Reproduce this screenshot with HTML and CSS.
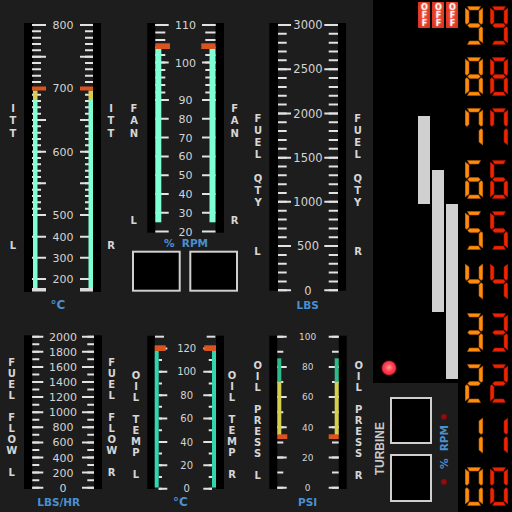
FILE: index.html
```html
<!DOCTYPE html>
<html lang="en">
<head>
<meta charset="utf-8">
<title>Engine Instruments</title>
<link rel="stylesheet" href="styles.css">
</head>
<body>
<svg class="defs" aria-hidden="true" width="0" height="0">
  <defs>
    <polygon id="sa" points="2.5,0.4 15.5,0.4 13.6,4 4.4,4"/>
    <polygon id="sf" points="0.2,2 4,5 4,16.3 2,18.4 0.2,17"/>
    <polygon id="sb" points="17.8,2 14,5 14,16.3 16,18.4 17.8,17"/>
    <polygon id="sg" points="2.6,19.5 4.6,17.6 13.4,17.6 15.4,19.5 13.4,21.4 4.6,21.4"/>
    <polygon id="se" points="0.2,22 2,20.6 4,22.7 4,34 0.2,37"/>
    <polygon id="sc" points="17.8,22 16,20.6 14,22.7 14,34 17.8,37"/>
    <polygon id="sd" points="4.4,35 13.6,35 15.5,38.6 2.5,38.6"/>
  </defs>
</svg>
<div class="screen">
  <div class="gauges">
    <!-- ITT -->
    <svg class="gauge" width="128" height="320" viewBox="0 0 128 320">
      <rect class="blk" x="24" y="23" width="9" height="269"/>
      <rect class="blk" x="93" y="23" width="8" height="269"/>
      <line class="tk" x1="36.5" y1="24" x2="36.5" y2="216" stroke-width="9" stroke-dasharray="2 4.3333"/>
      <line class="tk" x1="39" y1="24" x2="39" y2="216" stroke-width="14" stroke-dasharray="2 29.6667"/>
      <line class="tk" x1="89" y1="24" x2="89" y2="216" stroke-width="8" stroke-dasharray="2 4.3333"/>
      <line class="tk" x1="86.5" y1="24" x2="86.5" y2="216" stroke-width="13" stroke-dasharray="2 29.6667"/>
      <path class="tk" stroke-width="2" d="M32 236.7H46M32 257.7H46M32 279H46M80 236.7H93M80 257.7H93M80 279H93"/>
      <rect class="cap" x="32" y="288" width="14" height="3.5"/>
      <rect class="cap" x="80" y="288" width="13" height="3.5"/>
      <rect class="yl" x="33" y="90.5" width="4.5" height="9.5"/>
      <rect class="yl" x="88.5" y="90.5" width="4.5" height="9.5"/>
      <rect class="aq" x="33" y="100" width="4.5" height="188"/>
      <rect class="aq" x="88.5" y="100" width="4.5" height="188"/>
      <rect class="rd" x="32" y="86.5" width="14" height="4"/>
      <rect class="rd" x="80" y="86.5" width="13" height="4"/>
      <g class="n n11">
        <text x="63" y="29">800</text>
        <text x="63" y="92.3">700</text>
        <text x="63" y="155.7">600</text>
        <text x="63" y="219">500</text>
        <text x="63" y="240.7">400</text>
        <text x="63" y="261.7">300</text>
        <text x="63" y="283">200</text>
      </g>
      <text class="lb"><tspan x="13" y="112">I</tspan><tspan x="13" y="124.2">T</tspan><tspan x="13" y="136.5">T</tspan><tspan x="13" y="249.3">L</tspan></text>
      <text class="lb"><tspan x="111" y="112">I</tspan><tspan x="111" y="124.2">T</tspan><tspan x="111" y="136.5">T</tspan><tspan x="111" y="249.3">R</tspan></text>
      <text class="un u12" x="58" y="308.5">°C</text>
    </svg>

    <!-- FAN -->
    <svg class="gauge" width="128" height="320" viewBox="0 0 128 320">
      <rect class="blk" x="19.3" y="23" width="8" height="209.7"/>
      <rect class="blk" x="87.5" y="23" width="8.5" height="209.7"/>
      <line class="tk" x1="32.3" y1="24" x2="32.3" y2="101" stroke-width="10" stroke-dasharray="2 5.5"/>
      <line class="tk" x1="34" y1="24" x2="34" y2="101" stroke-width="13.4" stroke-dasharray="2 35.5"/>
      <line class="tk" x1="34" y1="99" x2="34" y2="233" stroke-width="13.4" stroke-dasharray="2 16.8"/>
      <line class="tk" x1="82.4" y1="24" x2="82.4" y2="101" stroke-width="10.2" stroke-dasharray="2 5.5"/>
      <line class="tk" x1="80.75" y1="24" x2="80.75" y2="101" stroke-width="13.5" stroke-dasharray="2 35.5"/>
      <line class="tk" x1="80.75" y1="99" x2="80.75" y2="233" stroke-width="13.5" stroke-dasharray="2 16.8"/>
      <rect class="aq" x="27.3" y="49" width="6" height="173.3"/>
      <rect class="aq" x="81.5" y="49" width="6" height="173.3"/>
      <rect class="rd" x="27.3" y="43.3" width="14.7" height="5.7"/>
      <rect class="rd" x="73.3" y="43.3" width="14.2" height="5.7"/>
      <g class="n n11">
        <text x="57.5" y="29">110</text>
        <text x="57.5" y="66.5">100</text>
        <text x="57.5" y="104">90</text>
        <text x="57.5" y="122.8">80</text>
        <text x="57.5" y="141.6">70</text>
        <text x="57.5" y="160.4">60</text>
        <text x="57.5" y="179.2">50</text>
        <text x="57.5" y="198">40</text>
        <text x="57.5" y="216.8">30</text>
        <text x="57.5" y="235.6">20</text>
      </g>
      <text class="lb"><tspan x="6" y="112">F</tspan><tspan x="6" y="124.2">A</tspan><tspan x="6" y="136.5">N</tspan><tspan x="5.7" y="223.6">L</tspan></text>
      <text class="lb"><tspan x="106.7" y="112">F</tspan><tspan x="106.7" y="124.2">A</tspan><tspan x="106.7" y="136.5">N</tspan><tspan x="106.7" y="223.6">R</tspan></text>
      <text class="un" x="58" y="247.1">%&#160;&#160;RPM</text>
      <rect class="frame" x="5" y="251.7" width="46.7" height="39"/>
      <rect class="frame" x="62.3" y="251.7" width="46.7" height="39"/>
    </svg>

    <!-- FUEL QTY -->
    <svg class="gauge" width="117" height="320" viewBox="0 0 117 320">
      <rect class="blk" x="13.3" y="23" width="8.7" height="267.7"/>
      <rect class="blk" x="82" y="23" width="8" height="267.7"/>
      <line class="tk" x1="26.35" y1="24" x2="26.35" y2="291.3" stroke-width="8.7" stroke-dasharray="2 6.843"/>
      <line class="tk" x1="28.5" y1="24" x2="28.5" y2="291.3" stroke-width="13" stroke-dasharray="2 42.215"/>
      <line class="tk" x1="77.35" y1="24" x2="77.35" y2="291.3" stroke-width="9.3" stroke-dasharray="2 6.843"/>
      <line class="tk" x1="75.15" y1="24" x2="75.15" y2="291.3" stroke-width="13.7" stroke-dasharray="2 42.215"/>
      <g class="n n115">
        <text x="52" y="29.2">3000</text>
        <text x="52" y="73.4">2500</text>
        <text x="52" y="117.6">2000</text>
        <text x="52" y="161.9">1500</text>
        <text x="52" y="206.1">1000</text>
        <text x="52" y="250.3">500</text>
        <text x="52" y="294.5">0</text>
      </g>
      <text class="lb"><tspan x="2" y="121.65">F</tspan><tspan x="2" y="133.65">U</tspan><tspan x="2" y="145.65">E</tspan><tspan x="2" y="157.65">L</tspan><tspan x="2" y="181.65">Q</tspan><tspan x="2" y="193.65">T</tspan><tspan x="2" y="205.65">Y</tspan><tspan x="1.5" y="255.35">L</tspan></text>
      <text class="lb"><tspan x="101.7" y="121.65">F</tspan><tspan x="101.7" y="133.65">U</tspan><tspan x="101.7" y="145.65">E</tspan><tspan x="101.7" y="157.65">L</tspan><tspan x="101.7" y="181.65">Q</tspan><tspan x="101.7" y="193.65">T</tspan><tspan x="101.7" y="205.65">Y</tspan><tspan x="102" y="255.35">R</tspan></text>
      <text class="un" x="51.7" y="308.8">LBS</text>
    </svg>

    <!-- FUEL FLOW -->
    <svg class="gauge" width="128" height="192" viewBox="0 0 128 192">
      <rect class="blk" x="24" y="15.3" width="8.3" height="153.7"/>
      <rect class="blk" x="94" y="15.3" width="8" height="153.7"/>
      <line class="tk" x1="35.8" y1="15.7" x2="35.8" y2="168.7" stroke-width="7" stroke-dasharray="2 5.55"/>
      <line class="tk" x1="37.8" y1="15.7" x2="37.8" y2="168.7" stroke-width="11" stroke-dasharray="2 13.1"/>
      <line class="tk" x1="90.65" y1="15.7" x2="90.65" y2="168.7" stroke-width="6.7" stroke-dasharray="2 5.55"/>
      <line class="tk" x1="88" y1="15.7" x2="88" y2="168.7" stroke-width="12" stroke-dasharray="2 13.1"/>
      <g class="n n11">
        <text x="63" y="20.7">2000</text>
        <text x="63" y="35.8">1800</text>
        <text x="63" y="50.9">1600</text>
        <text x="63" y="66">1400</text>
        <text x="63" y="81.1">1200</text>
        <text x="63" y="96.2">1000</text>
        <text x="63" y="111.3">800</text>
        <text x="63" y="126.4">600</text>
        <text x="63" y="141.5">400</text>
        <text x="63" y="156.6">200</text>
        <text x="63" y="171.7">0</text>
      </g>
      <text class="lb"><tspan x="11.7" y="45.65">F</tspan><tspan x="11.7" y="56.65">U</tspan><tspan x="11.7" y="67.65">E</tspan><tspan x="11.7" y="78.65">L</tspan><tspan x="11.7" y="100.65">F</tspan><tspan x="11.7" y="111.65">L</tspan><tspan x="11.7" y="122.65">O</tspan><tspan x="11.7" y="133.65">W</tspan><tspan x="11.7" y="156.15">L</tspan></text>
      <text class="lb"><tspan x="111.7" y="45.65">F</tspan><tspan x="111.7" y="56.65">U</tspan><tspan x="111.7" y="67.65">E</tspan><tspan x="111.7" y="78.65">L</tspan><tspan x="111.7" y="100.65">F</tspan><tspan x="111.7" y="111.65">L</tspan><tspan x="111.7" y="122.65">O</tspan><tspan x="111.7" y="133.65">W</tspan><tspan x="111.7" y="156.15">R</tspan></text>
      <text class="un" x="58.7" y="185.5">LBS/HR</text>
    </svg>

    <!-- OIL TEMP -->
    <svg class="gauge" width="128" height="192" viewBox="0 0 128 192">
      <rect class="blk" x="19.3" y="15.7" width="7.4" height="153.3"/>
      <rect class="blk" x="88" y="15.7" width="8" height="153.3"/>
      <rect class="cap" x="27" y="15.7" width="9" height="2"/>
      <rect class="cap" x="78.7" y="15.7" width="8.6" height="2"/>
      <line class="tk" x1="32.35" y1="27.4" x2="32.35" y2="169.7" stroke-width="3.3" stroke-dasharray="2 9.69"/>
      <line class="tk" x1="35" y1="27.4" x2="35" y2="169.7" stroke-width="8.6" stroke-dasharray="2 21.38"/>
      <line class="tk" x1="82.35" y1="27.4" x2="82.35" y2="169.7" stroke-width="3.3" stroke-dasharray="2 9.69"/>
      <line class="tk" x1="79.65" y1="27.4" x2="79.65" y2="169.7" stroke-width="8.7" stroke-dasharray="2 21.38"/>
      <rect class="tl" x="26.7" y="31" width="4" height="136.5"/>
      <rect class="tl" x="84" y="31" width="4" height="136.5"/>
      <rect class="rd" x="26.7" y="25.3" width="11" height="5.7"/>
      <rect class="rd" x="76.3" y="25.3" width="11.7" height="5.7"/>
      <g class="n n10">
        <text x="58.7" y="32.05">120</text>
        <text x="58.7" y="55.45">100</text>
        <text x="58.7" y="78.85">80</text>
        <text x="58.7" y="102.15">60</text>
        <text x="58.7" y="125.55">40</text>
        <text x="58.7" y="148.95">20</text>
        <text x="58.7" y="172.35">0</text>
      </g>
      <text class="lb"><tspan x="8" y="59.15">O</tspan><tspan x="8" y="70.15">I</tspan><tspan x="8" y="81.15">L</tspan><tspan x="8" y="103.15">T</tspan><tspan x="8" y="114.15">E</tspan><tspan x="8" y="125.15">M</tspan><tspan x="8" y="136.15">P</tspan><tspan x="8" y="158.15">L</tspan></text>
      <text class="lb"><tspan x="104" y="59.15">O</tspan><tspan x="104" y="70.15">I</tspan><tspan x="104" y="81.15">L</tspan><tspan x="104" y="103.15">T</tspan><tspan x="104" y="114.15">E</tspan><tspan x="104" y="125.15">M</tspan><tspan x="104" y="136.15">P</tspan><tspan x="104" y="158.15">R</tspan></text>
      <text class="un u12" x="52.3" y="186">°C</text>
    </svg>

    <!-- OIL PRESS -->
    <svg class="gauge" width="117" height="192" viewBox="0 0 117 192">
      <rect class="blk" x="13.3" y="15.7" width="8" height="153.3"/>
      <rect class="blk" x="82.7" y="15.7" width="8" height="153.3"/>
      <line class="tk" x1="24.3" y1="15.7" x2="24.3" y2="168.7" stroke-width="6" stroke-dasharray="2 13.1"/>
      <line class="tk" x1="26" y1="15.7" x2="26" y2="168.7" stroke-width="9.4" stroke-dasharray="2 28.2"/>
      <line class="tk" x1="79.35" y1="15.7" x2="79.35" y2="168.7" stroke-width="6.7" stroke-dasharray="2 13.1"/>
      <line class="tk" x1="77.7" y1="15.7" x2="77.7" y2="168.7" stroke-width="10" stroke-dasharray="2 28.2"/>
      <rect class="gn" x="21.3" y="38.3" width="4" height="24"/>
      <rect class="yl" x="21.3" y="62.3" width="4" height="52.7"/>
      <rect class="rd" x="21.3" y="114.3" width="10" height="4.7"/>
      <rect class="gn" x="78.7" y="38.3" width="4" height="24"/>
      <rect class="yl" x="78.7" y="62.3" width="4" height="52.7"/>
      <rect class="rd" x="72.7" y="114.3" width="10" height="4.7"/>
      <g class="n n9">
        <text x="51.7" y="20">100</text>
        <text x="51.7" y="50.2">80</text>
        <text x="51.7" y="80.4">60</text>
        <text x="51.7" y="110.6">40</text>
        <text x="51.7" y="140.8">20</text>
        <text x="51.7" y="171">0</text>
      </g>
      <text class="lb"><tspan x="1.7" y="48.65">O</tspan><tspan x="1.7" y="59.65">I</tspan><tspan x="1.7" y="70.65">L</tspan><tspan x="1.7" y="92.65">P</tspan><tspan x="1.7" y="103.65">R</tspan><tspan x="1.7" y="114.65">E</tspan><tspan x="1.7" y="125.65">S</tspan><tspan x="1.7" y="136.65">S</tspan><tspan x="1.7" y="158.65">L</tspan></text>
      <text class="lb"><tspan x="102.7" y="48.65">O</tspan><tspan x="102.7" y="59.65">I</tspan><tspan x="102.7" y="70.65">L</tspan><tspan x="102.7" y="92.65">P</tspan><tspan x="102.7" y="103.65">R</tspan><tspan x="102.7" y="114.65">E</tspan><tspan x="102.7" y="125.65">S</tspan><tspan x="102.7" y="136.65">S</tspan><tspan x="102.7" y="158.65">R</tspan></text>
      <text class="un" x="51.7" y="185.5">PSI</text>
    </svg>
  </div>

  <div class="mid">
    <div class="annun">
      <div class="ledcol"><span class="led"></span></div>
      <div class="cols">
        <div class="col"><span class="off">OFF</span><span class="bar" style="margin-top:88.3px;height:88px"></span></div>
        <div class="col"><span class="off">OFF</span><span class="bar" style="margin-top:142.3px;height:141.7px"></span></div>
        <div class="col"><span class="off">OFF</span><span class="bar" style="margin-top:176.3px;height:175.3px"></span></div>
      </div>
    </div>
    <div class="turb">
      <div class="tlabel">TURBINE</div>
      <div class="tboxes"><span class="tbox"></span><span class="tbox"></span></div>
      <div class="rpmcol"><span class="dot"></span><span class="rpm">%  RPM</span><span class="dot"></span></div>
    </div>
  </div>

  <div class="digits">
    <div class="row">
      <svg class="dg or" viewBox="0 0 18 39" role="img" aria-label="9"><use href="#sa"/><use href="#sb"/><use href="#sc"/><use href="#sd"/><use href="#sf"/><use href="#sg"/></svg>
      <svg class="dg re" viewBox="0 0 18 39" role="img" aria-label="9"><use href="#sa"/><use href="#sb"/><use href="#sc"/><use href="#sd"/><use href="#sf"/><use href="#sg"/></svg>
    </div>
    <div class="row">
      <svg class="dg or" viewBox="0 0 18 39" role="img" aria-label="8"><use href="#sa"/><use href="#sb"/><use href="#sc"/><use href="#sd"/><use href="#se"/><use href="#sf"/><use href="#sg"/></svg>
      <svg class="dg re" viewBox="0 0 18 39" role="img" aria-label="8"><use href="#sa"/><use href="#sb"/><use href="#sc"/><use href="#sd"/><use href="#se"/><use href="#sf"/><use href="#sg"/></svg>
    </div>
    <div class="row">
      <svg class="dg or" viewBox="0 0 18 39" role="img" aria-label="7"><use href="#sa"/><use href="#sb"/><use href="#sc"/><use href="#sf"/></svg>
      <svg class="dg re" viewBox="0 0 18 39" role="img" aria-label="7"><use href="#sa"/><use href="#sb"/><use href="#sc"/><use href="#sf"/></svg>
    </div>
    <div class="row">
      <svg class="dg or" viewBox="0 0 18 39" role="img" aria-label="6"><use href="#sa"/><use href="#sc"/><use href="#sd"/><use href="#se"/><use href="#sf"/><use href="#sg"/></svg>
      <svg class="dg re" viewBox="0 0 18 39" role="img" aria-label="6"><use href="#sa"/><use href="#sc"/><use href="#sd"/><use href="#se"/><use href="#sf"/><use href="#sg"/></svg>
    </div>
    <div class="row">
      <svg class="dg or" viewBox="0 0 18 39" role="img" aria-label="5"><use href="#sa"/><use href="#sc"/><use href="#sd"/><use href="#sf"/><use href="#sg"/></svg>
      <svg class="dg re" viewBox="0 0 18 39" role="img" aria-label="5"><use href="#sa"/><use href="#sc"/><use href="#sd"/><use href="#sf"/><use href="#sg"/></svg>
    </div>
    <div class="row">
      <svg class="dg or" viewBox="0 0 18 39" role="img" aria-label="4"><use href="#sb"/><use href="#sc"/><use href="#sf"/><use href="#sg"/></svg>
      <svg class="dg re" viewBox="0 0 18 39" role="img" aria-label="4"><use href="#sb"/><use href="#sc"/><use href="#sf"/><use href="#sg"/></svg>
    </div>
    <div class="row">
      <svg class="dg or" viewBox="0 0 18 39" role="img" aria-label="3"><use href="#sa"/><use href="#sb"/><use href="#sc"/><use href="#sd"/><use href="#sg"/></svg>
      <svg class="dg re" viewBox="0 0 18 39" role="img" aria-label="3"><use href="#sa"/><use href="#sb"/><use href="#sc"/><use href="#sd"/><use href="#sg"/></svg>
    </div>
    <div class="row">
      <svg class="dg or" viewBox="0 0 18 39" role="img" aria-label="2"><use href="#sa"/><use href="#sb"/><use href="#sd"/><use href="#se"/><use href="#sg"/></svg>
      <svg class="dg re" viewBox="0 0 18 39" role="img" aria-label="2"><use href="#sa"/><use href="#sb"/><use href="#sd"/><use href="#se"/><use href="#sg"/></svg>
    </div>
    <div class="row">
      <svg class="dg or" viewBox="0 0 18 39" role="img" aria-label="1"><use href="#sb"/><use href="#sc"/></svg>
      <svg class="dg re" viewBox="0 0 18 39" role="img" aria-label="1"><use href="#sb"/><use href="#sc"/></svg>
    </div>
    <div class="row">
      <svg class="dg or" viewBox="0 0 18 39" role="img" aria-label="0"><use href="#sa"/><use href="#sb"/><use href="#sc"/><use href="#sd"/><use href="#se"/><use href="#sf"/></svg>
      <svg class="dg re" viewBox="0 0 18 39" role="img" aria-label="0"><use href="#sa"/><use href="#sb"/><use href="#sc"/><use href="#sd"/><use href="#se"/><use href="#sf"/></svg>
    </div>
  </div>
</div>
</body>
</html>
```

FILE: styles.css
```css
* { box-sizing: border-box; }
html, body { margin: 0; padding: 0; }
body {
  width: 512px;
  height: 512px;
  overflow: hidden;
  background: #1d1d1d;
  font-family: "DejaVu Sans", sans-serif;
}
.defs { display: block; width: 0; height: 0; }

.screen {
  display: grid;
  grid-template-columns: 373px 85px 54px;
  height: 512px;
}

/* gauge faces */
.gauges {
  display: grid;
  grid-template-columns: 128px 128px 117px;
  grid-template-rows: 320px 192px;
}
.gauge { display: block; overflow: visible; }
.blk { fill: #000; }
.tk { stroke: #e2e2e2; fill: none; }
.cap { fill: #dcdcdc; }
.aq { fill: #7fffd4; }
.tl { fill: #34d4ae; }
.yl { fill: #d4cf4e; }
.rd { fill: #d9541f; }
.gn { fill: #2dbb8a; }
.frame { fill: #000; stroke: #d0d0d0; stroke-width: 2; }
.n { fill: #d4d4d4; text-anchor: middle; font-family: "DejaVu Sans", sans-serif; }
.n11 { font-size: 11px; }
.n115 { font-size: 11.5px; }
.n10 { font-size: 10px; }
.n9 { font-size: 9px; }
.lb { fill: #d6d6d6; text-anchor: middle; font: bold 10px "DejaVu Sans", sans-serif; }
.un { fill: #4a90d0; text-anchor: middle; font: bold 10.5px "DejaVu Sans", sans-serif; }
.u12 { font-size: 12px; }

/* annunciator / bar column */
.mid { display: flex; flex-direction: column; }
.annun {
  height: 383px;
  background: #000;
  display: flex;
}
.ledcol {
  width: 45px;
  display: flex;
  align-items: flex-end;
  padding: 0 0 8.3px 8.7px;
}
.led {
  width: 14px;
  height: 14px;
  border-radius: 50%;
  background: radial-gradient(circle at 50% 45%, #ff9aa4 0, #ff4050 40%, #d81828 100%);
  box-shadow: 0 0 2px #e02838;
}
.cols { display: flex; gap: 2px; }
.col { width: 12px; display: flex; flex-direction: column; }
.off {
  display: block;
  margin-top: 2px;
  width: 12px;
  height: 25.7px;
  overflow: hidden;
  background: radial-gradient(ellipse at 50% 50%, #ee4a38 0, #d8301e 100%);
  color: #fff4f0;
  writing-mode: vertical-rl;
  text-orientation: upright;
  font: bold 8px/12px "DejaVu Sans", sans-serif;
  letter-spacing: -1.2px;
  text-align: center;
  text-shadow: 0 0 2px #ffb4a8;
}
.bar { display: block; background: #d0d0d0; }

/* turbine */
.turb {
  flex: 1;
  display: flex;
  align-items: flex-start;
}
.tlabel {
  width: 15px;
  align-self: center;
  margin-top: 3px;
  writing-mode: vertical-rl;
  transform: rotate(180deg);
  font: bold 12px/15px "Liberation Sans", sans-serif;
  color: #c8c8c8;
  text-align: center;
}
.tboxes {
  display: flex;
  flex-direction: column;
  gap: 9.7px;
  padding-top: 13.7px;
  margin-left: 2.3px;
}
.tbox {
  display: block;
  width: 41.7px;
  height: 47.6px;
  border: 2px solid #cfcfcf;
  background: #000;
}
.rpmcol {
  width: 19.4px;
  margin-left: 2px;
  display: flex;
  flex-direction: column;
  align-items: center;
  padding-top: 30.7px;
}
.dot {
  display: block;
  width: 6px;
  height: 6px;
  border-radius: 50%;
  background: radial-gradient(circle at 45% 40%, #a01010 0, #6a0606 100%);
}
.rpm {
  display: block;
  margin: 5.3px 0 10.4px;
  writing-mode: vertical-rl;
  transform: rotate(180deg);
  white-space: pre;
  font: bold 10.5px/12px "DejaVu Sans", sans-serif;
  color: #4a90d0;
}

/* seven segment digits */
.digits {
  background: #000;
  display: flex;
  flex-direction: column;
}
.row {
  flex: 1;
  display: flex;
  gap: 7.6px;
  padding: 6px 0 0 6.7px;
}
.dg { display: block; width: 18px; height: 39px; }
.or { fill: #ff8c0a; stroke: #b85a00; stroke-width: 0.6; }
.re { fill: #ee2400; stroke: #a01500; stroke-width: 0.6; }
```
